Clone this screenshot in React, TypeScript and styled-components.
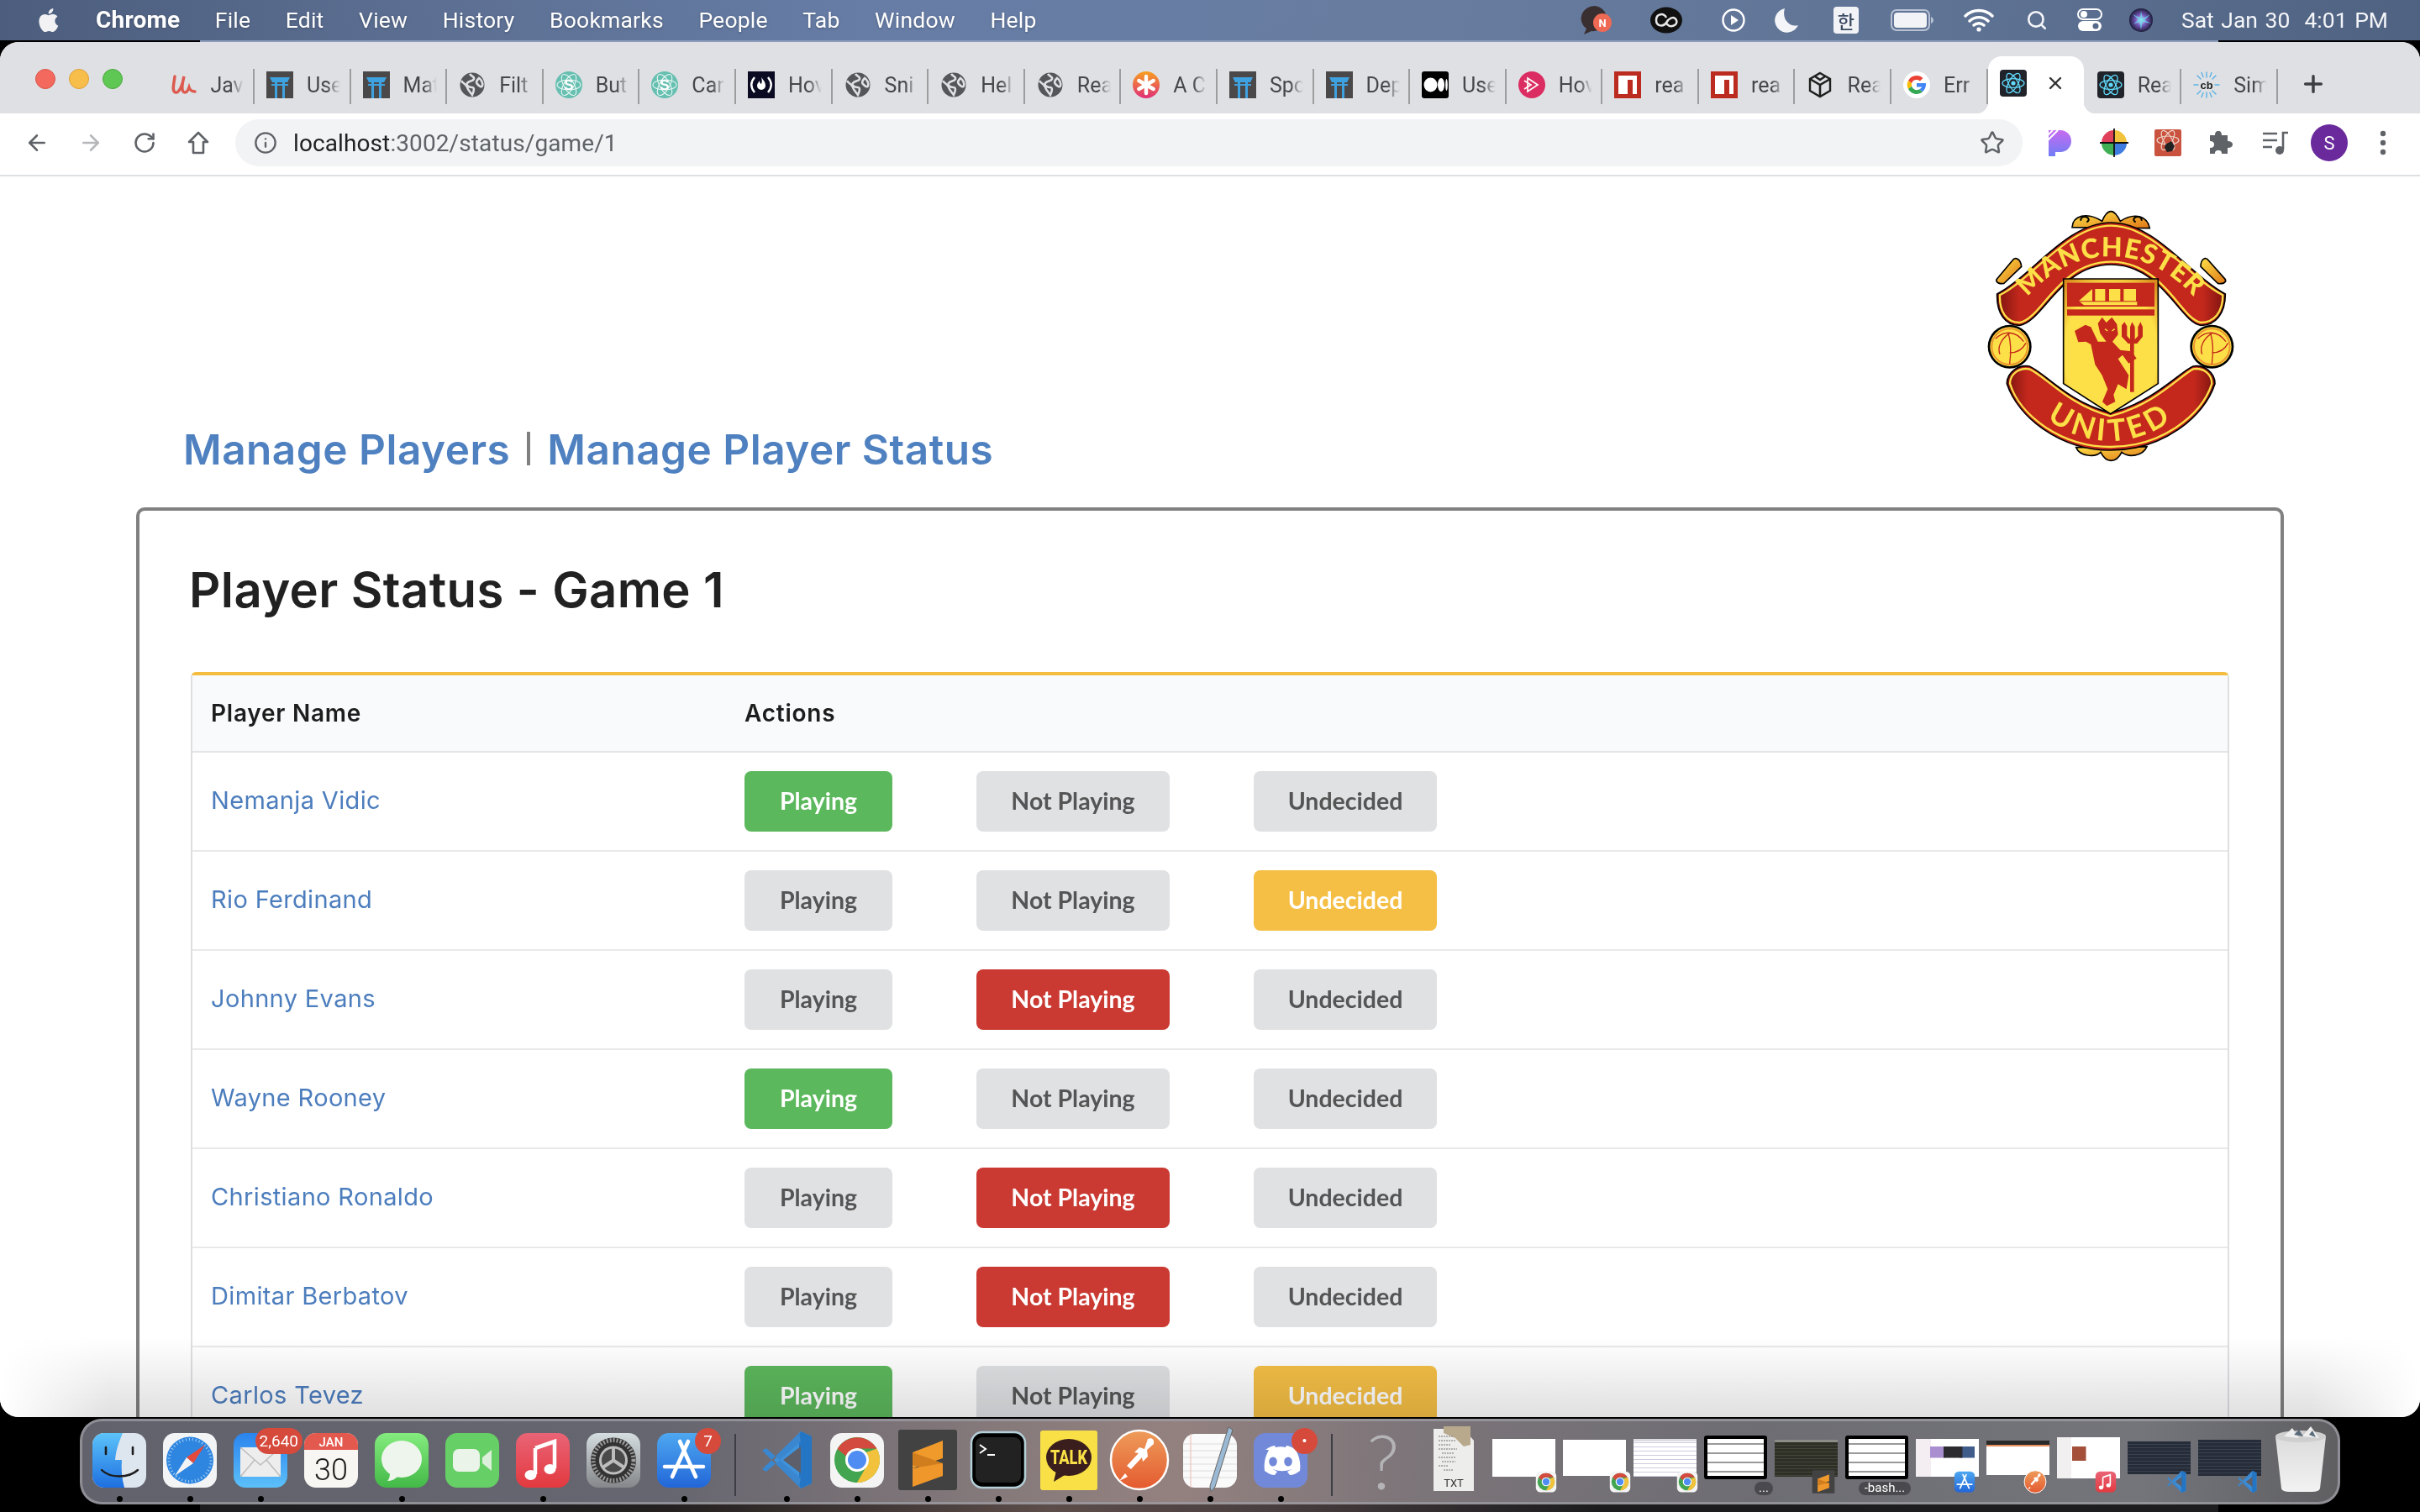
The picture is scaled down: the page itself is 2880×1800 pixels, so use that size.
import React from "react";
import styled, { createGlobalStyle } from "styled-components";
import { ArrowLeft, ArrowRight, RotateCw, Info, Star, Search, X, Plus } from "lucide-react";

const Global = createGlobalStyle`
  html, body { margin: 0; padding: 0; background: #000; }
  * { box-sizing: border-box; }
`;

const SANS = `"Inter", "Liberation Sans", sans-serif`;
const UI = `"Roboto", "Liberation Sans", sans-serif`;

const Screen = styled.div`
  width: 2880px; height: 1800px; background: #000; overflow: hidden;
  display: flex; flex-direction: column; font-family: ${SANS};
`;

/* ---------- macOS menu bar ---------- */
const MenuBar = styled.header`
  height: 50px; flex: none; display: flex; align-items: center; padding: 0 0 3px 45px; color: #fff;
  background:
    linear-gradient(to right, #000 238px, #8d9cbb 238px, #8d9cbb 2640px, #000 2640px) bottom / 100% 2px no-repeat,
    linear-gradient(to right, #4c5d7d 0, #5c6f92 500px, #677da6 1050px, #687c9f 1700px, #5f7395 2300px, #4f6281 2880px);
`;
const AppleMark = styled.svg`width: 28px; height: 34px; margin-right: 41px; fill: #f2f2f4;`;
const MenuList = styled.nav`display: flex; gap: 41.6px; flex: 1; align-items: center;`;
const MenuItem = styled.span<{ $bold?: boolean }>`
  font: ${(p) => (p.$bold ? 700 : 400)} ${(p) => (p.$bold ? "28px" : "26.5px")} ${UI}; letter-spacing: 0.2px; white-space: nowrap;
  color: #fff; text-shadow: 0 1px 3px rgba(0,0,0,.25);
`;
const StatusArea = styled.div`display: flex; align-items: center; height: 100%;`;
const StatusSlot = styled.span<{ $w: number }>`
  width: ${(p) => p.$w}px; display: flex; align-items: center; justify-content: center; flex: none;
`;
const ClockText = styled.span`
  font: 400 26.5px ${UI}; color: #f4f5f8; white-space: nowrap; margin-left: 18px; margin-right: 38px; word-spacing: 2px;
`;

/* ---------- browser window ---------- */
const Win = styled.main`
  height: 1637px; flex: none; display: flex; flex-direction: column; overflow: hidden;
  border-radius: 22px; background: #fff; position: relative;
`;
const TabStrip = styled.div`
  height: 85px; flex: none; background: #dfe0e3; display: flex; align-items: flex-start;
`;
const Lights = styled.div`
  width: 188.4px; flex: none; display: flex; gap: 16px; padding: 32px 0 0 42px;
`;
const Light = styled.i<{ $c: string; $e: string }>`
  width: 24px; height: 24px; border-radius: 50%; background: ${(p) => p.$c}; border: 1px solid ${(p) => p.$e};
`;
const Tab = styled.div`
  width: 114.6px; height: 42px; margin-top: 32px; flex: none; display: flex; align-items: center; gap: 16px;
  padding-left: 14px; padding-bottom: 4px; border-right: 2px solid #9c9d9f;
`;
const TabLabel = styled.span`
  width: 48px; white-space: nowrap; font: 400 25px ${UI}; color: #45474a;
  -webkit-mask-image: linear-gradient(to right, #000 24px, transparent 40px);
  mask-image: linear-gradient(to right, #000 24px, transparent 40px);
`;
const ActiveTab = styled.div`
  width: 114px; height: 68px; margin-top: 17px; margin-right: 2px; flex: none; background: #fff; position: relative;
  border-radius: 16px 16px 0 0; display: flex; align-items: center; gap: 22px; padding: 0 0 4px 14px; color: #333;
  &::before, &::after { content: ""; position: absolute; bottom: 0; width: 14px; height: 14px; }
  &::before { left: -14px; background: radial-gradient(circle at 0 0, transparent 14px, #fff 14.5px); }
  &::after { right: -14px; background: radial-gradient(circle at 100% 0, transparent 14px, #fff 14.5px); }
`;
const NewTab = styled.span`
  margin: 34px 0 0 26px; color: #3c3e42; display: flex;
`;
const Toolbar = styled.div`
  height: 75px; flex: none; display: flex; align-items: center; background: #fff; border-bottom: 2px solid #dfe0e3;
  padding: 0 0 3px 0;
`;
const ToolSlot = styled.span<{ $w: number; $c?: string }>`
  width: ${(p) => p.$w}px; flex: none; display: flex; align-items: center; justify-content: center;
  color: ${(p) => p.$c || "#5f6368"};
`;
const Omnibox = styled.div`
  width: 2127px; height: 56px; flex: none; margin: 0 13px 0 12px; border-radius: 28px; background: #f1f3f4;
  display: flex; align-items: center; padding: 0 21px 0 22px; color: #5f6368;
`;
const UrlText = styled.span`
  font: 400 28px ${UI}; color: #5f6368; margin-left: 19px; flex: 1; letter-spacing: 0.1px;
  b { font-weight: 400; color: #202124; }
`;
const Avatar = styled.span`
  width: 44px; height: 44px; border-radius: 50%; background: #6a2a9c; color: #fff;
  display: flex; align-items: center; justify-content: center; font: 400 22px ${UI};
`;

/* ---------- page ---------- */
const Page = styled.section`
  flex: 1; min-height: 0; position: relative; overflow: hidden; background: #fff;
  &::after {
    content: ""; position: absolute; left: 0; right: 0; bottom: 0; height: 95px; pointer-events: none;
    background: linear-gradient(to bottom, rgba(255,255,255,0), rgba(205,205,207,.62));
    mix-blend-mode: multiply;
    -webkit-mask-image: linear-gradient(to right, transparent 0, #000 130px, #000 2750px, transparent 2880px);
    mask-image: linear-gradient(to right, transparent 0, #000 130px, #000 2750px, transparent 2880px);
  }
`;
const PageHead = styled.div`
  height: 394px; display: flex; justify-content: space-between; align-items: flex-start;
  padding: 20px 200px 0 218px;
`;
const PageNav = styled.nav`
  display: flex; align-items: center; margin-top: 272px; gap: 20px;
`;
const NavLink = styled.a`
  font: 600 49.5px ${SANS}; letter-spacing: 0.5px; color: #4f81c0; white-space: nowrap; line-height: 66px;
`;
const NavDivider = styled.span`
  width: 4px; height: 40px; background: #808080; flex: none; margin-top: -2px;
`;
const LogoSvg = styled.svg`width: 360px; height: 340px; flex: none; display: block;`;

const Card = styled.div`
  margin: 0 162px 0 162px; border: 4px solid #808080; border-radius: 10px; padding: 48px 61px 0 61px; background: #fff;
`;
const Title = styled.h1`
  margin: 0 0 52px -2px; font: 600 58px/92px ${SANS}; color: #212121; letter-spacing: 0.4px;
`;
const Table = styled.table`
  width: 100%; border-collapse: separate; border-spacing: 0; table-layout: fixed;
  border-top: 4px solid #f4bd3f; border-left: 2px solid #dedfe1; border-right: 2px solid #dedfe1; border-radius: 6px 6px 0 0;
`;
const NameCol = styled.col`width: 634px;`;
const HeadCell = styled.th`
  height: 92px; text-align: left; background: #f9fafb; padding: 0 0 0 22px; border-bottom: 2px solid #e3e4e6;
  font: 600 28px ${SANS}; color: #1d1d1d; letter-spacing: 0.75px;
  &:last-child { padding-left: 23px; }
`;
const Cell = styled.td`
  height: 118px; padding: 0 0 0 22px; border-bottom: 2px solid #e9e9ea; vertical-align: middle;
  &:last-child { padding-left: 23px; }
`;
const PlayerLink = styled.a`
  font: 400 29px ${SANS}; letter-spacing: 0.35px; color: #4c7dbd; position: relative; top: -2px;
`;
const Actions = styled.div`display: flex; gap: 100px;`;
const ToggleBtn = styled.button<{ $on?: string; $w: number }>`
  width: ${(p) => p.$w}px; height: 72px; border: 0; border-radius: 8px; padding: 0 0 3px; cursor: pointer;
  background: ${(p) => p.$on || "#e0e1e3"}; color: ${(p) => (p.$on ? "#fff" : "#555")};
  font: 700 28.5px "Lato", sans-serif;
`;

/* ---------- dock ---------- */
const DockZone = styled.footer`
  height: 113px; flex: none; padding: 2px 0 0 95px;
  background:
    linear-gradient(to bottom, #000 2px, transparent 2px),
    linear-gradient(to right, #000 238px, #1d1d20 238px, #23201f 800px, #5c4d4a 1250px, #4a3f40 1500px, #1c1c1f 1900px, #1d1d20 2640px, #000 2640px);
`;
const Dock = styled.div`
  width: 2690px; height: 102px; border-radius: 26px; border: 3px solid rgba(158,158,164,.75);
  display: flex; padding: 4px 0 0 2px;
  background: linear-gradient(to right, #62626c 0, #666670 700px, #8a7c7c 1150px, #93817f 1300px, #7b7479 1600px, #6d6d73 2000px, #74757b 2450px, #5f5f62 2690px);
`;
const DockItem = styled.div`
  width: 84px; flex: none; height: 92px; position: relative; display: flex; flex-direction: column; align-items: center;
`;
const RunDot = styled.i<{ $on?: boolean }>`
  width: 7px; height: 7px; border-radius: 50%; margin-top: 1px; background: ${(p) => (p.$on ? "#000" : "transparent")}; flex: none;
`;
const DockSep = styled.div`
  width: 38px; flex: none; display: flex; justify-content: center; padding-top: 11px;
  &::before { content: ""; width: 2px; height: 74px; background: #3d3d44; }
`;
const Badge = styled.span<{ $size?: boolean }>`
  position: absolute; top: 4px; right: ${(p) => (p.$size ? "-8px" : "-2px")}; height: 31px; min-width: 31px;
  padding: 0 5px; border-radius: 16px; background: #d64a3c; color: #fff; font: 400 19px/31px ${UI}; text-align: center;
`;
const ThumbSlot = styled.div`
  width: 84px; height: 92px; flex: none; position: relative; display: flex; justify-content: center;
`;
const ThumbPage = styled.div<{ $top: number; $h: number; $kind: string }>`
  position: absolute; top: ${(p) => p.$top}px; left: 4px; width: 75px; height: ${(p) => p.$h}px; overflow: hidden;
  ${(p) => p.$kind === "blank" && "background:#fff;"}
  ${(p) => p.$kind === "web" && "background:linear-gradient(to bottom,#dcdde0 3px,transparent 3px) top/100% 100% no-repeat,repeating-linear-gradient(to bottom,#fff 0,#fff 4px,#cfcbe0 4px,#cfcbe0 5px);"}
  ${(p) => p.$kind === "term" && "background:repeating-linear-gradient(to bottom,#fff 0,#fff 5px,#9a9a9a 5px,#9a9a9a 7px,#fff 7px,#fff 11px);border:4px solid #000;border-radius:3px;"}
  ${(p) => p.$kind === "subl" && "background:repeating-linear-gradient(to bottom,#2e2f26 0,#2e2f26 3px,#44463a 3px,#44463a 4px);border-top:3px solid #8c8c88;"}
  ${(p) => p.$kind === "store" && "background:linear-gradient(#2c2c30,#2c2c30) 62% 30%/30% 30% no-repeat,linear-gradient(#3f5c8a,#3f5c8a) 92% 30%/24% 30% no-repeat,linear-gradient(#aa8fd0,#aa8fd0) 30% 30%/24% 30% no-repeat,linear-gradient(to right,#f4eef2 24%,#fff 24%);"}
  ${(p) => p.$kind === "post" && "background:linear-gradient(to bottom,#2a2a2a 5px,#e88e5b 5px,#e88e5b 7px,#fff 7px);"}
  ${(p) => p.$kind === "music" && "background:linear-gradient(#a34f3a,#a34f3a) 30% 35%/22% 35% no-repeat,linear-gradient(to right,#f1efef 22%,#fff 22%);"}
  ${(p) => p.$kind === "code" && "background:repeating-linear-gradient(to bottom,#262c38 0,#262c38 3px,#3a4252 3px,#3a4252 4px);"}
`;
const ThumbMini = styled.span<{ $right: number }>`
  position: absolute; top: 52px; right: ${(p) => p.$right}px; display: flex;
`;
const ThumbPill = styled.span<{ $left: number; $w: number }>`
  position: absolute; top: 68px; left: ${(p) => p.$left}px; width: ${(p) => p.$w}px; height: 16px; border-radius: 8px;
  background: #4a4a4e; color: #fff; font: 400 15px/15px ${UI}; text-align: center; white-space: nowrap;
`;
const HangulTile = styled.span`
  width: 30px; height: 32px; border-radius: 4px; background: #f2f3f6; color: #3b4a63;
  display: flex; align-items: center; justify-content: center; font: 500 22px "Noto Sans CJK KR", sans-serif;
`;
const QuestionMark = styled.span`
  font: 300 90px/84px "Lato", sans-serif; color: #b4b4b6; height: 84px;
`;

/* ---------- drawings ---------- */
const Fav: React.FC<{ k: string }> = ({ k }) => {
  const s = { width: 32, height: 32, flex: "none" } as const;
  switch (k) {
    case "udemy":
      return <svg viewBox="0 0 32 32" style={s}><path d="M6 6c-1 9-4 18 1 19 4 1 8-8 10-19-2 8-4 19 1 19 3 0 4-3 5-6 1 3 3 5 7 5" fill="none" stroke="#dd5a50" strokeWidth="3.400" strokeLinecap="round" /></svg>;
    case "torii":
      return <svg viewBox="0 0 32 32" style={s}><rect width="32" height="32" fill="#4a4848" /><path d="M4 7h24l-3 6H7zM6 15h20v2H6zM10 13h3v19h-3zM19 13h3v19h-3z" fill="#3fa2e0" /></svg>;
    case "globe":
      return <svg viewBox="0 0 32 32" style={s}><circle cx="16" cy="16" r="14.500" fill="#55565a" /><path d="M13 3c2 3 6 3 5 6s-6 2-8 5 3 5 6 5 2 5 0 9c-2-3-5-5-6-9s-6-5-7-8M24 8c3 2 5 6 4 9s-4 0-6-2 0-5 2-7z" fill="none" stroke="#dfe0e3" strokeWidth="2.600" /></svg>;
    case "reacts":
      return <svg viewBox="0 0 32 32" style={s}><circle cx="16" cy="16" r="16" fill="#66bfb0" /><g fill="none" stroke="#e8f7f3" strokeWidth="1.100"><ellipse cx="16" cy="16" rx="14" ry="6" /><ellipse cx="16" cy="16" rx="14" ry="6" transform="rotate(60 16 16)" /><ellipse cx="16" cy="16" rx="14" ry="6" transform="rotate(120 16 16)" /></g><text x="16" y="22" textAnchor="middle" fontSize="17" fontWeight="700" fill="#fff" fontFamily="Liberation Sans">S</text></svg>;
    case "fcc":
      return <svg viewBox="0 0 32 32" style={s}><rect width="32" height="32" fill="#0a0a23" /><path d="M8 7c-5 6-5 12 0 18M24 7c5 6 5 12 0 18" fill="none" stroke="#fff" strokeWidth="2.400" /><path d="M16 7c4 5 5 7 5 10a5 5 0 0 1-10 0c0-3 2-4 3-6 0 3 1 3 2 4 1-2 1-5 0-8z" fill="#fff" /></svg>;
    case "aster":
      return <svg viewBox="0 0 32 32" style={s}><defs><linearGradient id="astg" x1="0" y1="0" x2="0" y2="1"><stop offset="0" stopColor="#f7a020" /><stop offset="1" stopColor="#e02f78" /></linearGradient></defs><circle cx="16" cy="16" r="16" fill="url(#astg)" /><g stroke="#fff" strokeWidth="4.400" strokeLinecap="round"><path d="M16 6v20M7.300 11l17.400 10M24.700 11L7.300 21" /></g></svg>;
    case "medium":
      return <svg viewBox="0 0 32 32" style={s}><rect width="32" height="32" rx="3" fill="#000" /><ellipse cx="10.500" cy="16" rx="8" ry="8.500" fill="#fff" /><ellipse cx="23" cy="16" rx="4" ry="8" fill="#fff" /><ellipse cx="29.500" cy="16" rx="1.300" ry="7" fill="#fff" /></svg>;
    case "plural":
      return <svg viewBox="0 0 32 32" style={s}><circle cx="16" cy="16" r="16" fill="#db2d62" /><path d="M11 8l12 8-12 8zM7 11l8 5-8 5" fill="none" stroke="#fff" strokeWidth="1.700" /></svg>;
    case "npm":
      return <svg viewBox="0 0 32 32" style={s}><rect width="32" height="32" fill="#bb2b1f" /><path d="M5 5h22v22h-5V10h-6v17H5z" fill="#fff" /></svg>;
    case "box":
      return <svg viewBox="0 0 32 32" style={s}><path d="M16 2l12 7v14l-12 7-12-7V9z" fill="none" stroke="#1f1f1f" strokeWidth="2.400" /><path d="M4 9l12 7 12-7M16 16v14M10 6l6 4 6-4" fill="none" stroke="#1f1f1f" strokeWidth="2.600" /></svg>;
    case "google":
      return <svg viewBox="0 0 32 32" style={s}><circle cx="16" cy="16" r="16" fill="#fff" /><path d="M16 5a11 11 0 0 1 7.500 2.900l-3.600 3.500A6 6 0 0 0 16 10z" fill="#ea4335" /><path d="M16 5a11 11 0 0 0-10 6l4.100 3.200A6 6 0 0 1 16 10z" fill="#ea4335" /><path d="M6 11a11 11 0 0 0 0 10l4.100-3.200a6 6 0 0 1 0-3.600z" fill="#fbbc05" /><path d="M6 21a11 11 0 0 0 17 3.200l-3.900-3a6 6 0 0 1-9-3.400z" fill="#34a853" /><path d="M27 14H16v4.500h6.200a5 5 0 0 1-3.100 2.700l3.900 3c2.800-2.500 4.400-6 4-10.200z" fill="#4285f4" /></svg>;
    case "reactd":
      return <svg viewBox="0 0 32 32" style={s}><rect width="32" height="32" rx="4" fill="#20232a" /><g fill="none" stroke="#61dafb" strokeWidth="1.300"><ellipse cx="16" cy="16" rx="13" ry="5.400" /><ellipse cx="16" cy="16" rx="13" ry="5.400" transform="rotate(60 16 16)" /><ellipse cx="16" cy="16" rx="13" ry="5.400" transform="rotate(120 16 16)" /></g><circle cx="16" cy="16" r="2.600" fill="#61dafb" /></svg>;
    default:
      return <svg viewBox="0 0 32 32" style={s}><g stroke="#5ab2e6" strokeWidth="1.400" strokeLinecap="round"><path d="M16 1v6M16 25v6M1 16h5M26 16h5M5 5l4 4M23 23l4 4M27 5l-4 4M9 23l-4 4M10 1.500l2 5M22 1.500l-2 5M10 30.500l2-5M22 30.500l-2-5" /></g><text x="16" y="21" textAnchor="middle" fontSize="13" fontWeight="700" fill="#222" fontFamily="Liberation Sans">cb</text></svg>;
  }
};

const AppIcon: React.FC<{ k: string; size?: number }> = ({ k, size = 84 }) => {
  const s = { width: size, height: size, flex: "none", display: "block" } as const;
  const V = "0 0 84 84";
  switch (k) {
    case "finder":
      return <svg viewBox={V} style={s}><defs><linearGradient id="fg" x1="0" y1="0" x2="0" y2="1"><stop offset="0" stopColor="#5cc3fa" /><stop offset="1" stopColor="#1e6fe0" /></linearGradient></defs><rect x="10" y="10" width="64" height="65" rx="14" fill="#dde5ef" /><path d="M24 10h22c-5 12-8 20-9 32h8c-1 11 0 22 3 33H24a14 14 0 0 1-14-14V24a14 14 0 0 1 14-14z" fill="url(#fg)" /><path d="M26 27v8M58 27v8" stroke="#1c1c1c" strokeWidth="2.600" strokeLinecap="round" /><path d="M21 54c10 10 32 10 43 0" fill="none" stroke="#1c1c1c" strokeWidth="2.400" strokeLinecap="round" /></svg>;
    case "safari":
      return <svg viewBox={V} style={s}><rect x="10" y="10" width="64" height="65" rx="14" fill="#f3f4f5" /><circle cx="42" cy="42.500" r="28" fill="#2f86e0" /><circle cx="42" cy="42.500" r="25" fill="none" stroke="#a9d2f5" strokeWidth="3" strokeDasharray="1 3" /><path d="M60 24L38 39l8 7z" fill="#e5493c" /><path d="M24 61l22-15-8-7z" fill="#f4f4f4" /></svg>;
    case "mail":
      return <svg viewBox={V} style={s}><defs><linearGradient id="mg" x1="0" y1="0" x2="0" y2="1"><stop offset="0" stopColor="#2a84ee" /><stop offset="1" stopColor="#5cc0fa" /></linearGradient></defs><rect x="10" y="10" width="64" height="65" rx="14" fill="url(#mg)" /><rect x="18" y="27" width="48" height="35" rx="3" fill="#ededed" /><path d="M18 27l24 21 24-21M18 62l17-20M66 62L49 42" fill="none" stroke="#bdbdbd" strokeWidth="1.500" /></svg>;
    case "calendar":
      return <svg viewBox={V} style={s}><rect x="10" y="10" width="64" height="65" rx="14" fill="#f7f6f2" /><path d="M24 10h36a14 14 0 0 1 14 14v6H10v-6a14 14 0 0 1 14-14z" fill="#e4594e" /><text x="42" y="26" textAnchor="middle" fontSize="15" fontWeight="500" fill="#fff" fontFamily="Roboto">JAN</text><text x="42" y="66" textAnchor="middle" fontSize="36" fontWeight="300" fill="#1a1a1a" fontFamily="Roboto">30</text></svg>;
    case "messages":
      return <svg viewBox={V} style={s}><defs><linearGradient id="msg" x1="0" y1="0" x2="0" y2="1"><stop offset="0" stopColor="#84ec7e" /><stop offset="1" stopColor="#43b948" /></linearGradient></defs><rect x="10" y="10" width="64" height="65" rx="14" fill="url(#msg)" /><ellipse cx="42" cy="41" rx="24" ry="22" fill="#eef5ec" /><path d="M28 58c0 4-1 7-3 9 5 0 9-2 12-5z" fill="#eef5ec" /></svg>;
    case "facetime":
      return <svg viewBox={V} style={s}><rect x="10" y="10" width="64" height="65" rx="14" fill="#66cf66" /><rect x="19" y="29" width="32" height="27" rx="7" fill="#eaf4e8" /><path d="M54 39l11-9v25l-11-9z" fill="#dcefda" /></svg>;
    case "music":
      return <svg viewBox={V} style={s}><defs><linearGradient id="mug" x1="0" y1="0" x2="0" y2="1"><stop offset="0" stopColor="#e96476" /><stop offset="1" stopColor="#e3393f" /></linearGradient></defs><rect x="10" y="10" width="64" height="65" rx="14" fill="url(#mug)" /><path d="M33 28l23-8v32" fill="none" stroke="#fff" strokeWidth="4.500" /><path d="M33 28v31" stroke="#fff" strokeWidth="4.500" /><ellipse cx="27.500" cy="60" rx="7" ry="6" fill="#fff" /><ellipse cx="50.500" cy="53" rx="7" ry="6" fill="#fff" /></svg>;
    case "prefs":
      return <svg viewBox={V} style={s}><defs><linearGradient id="pg" x1="0" y1="0" x2="0" y2="1"><stop offset="0" stopColor="#d5dde0" /><stop offset="1" stopColor="#85878a" /></linearGradient></defs><rect x="10" y="10" width="64" height="65" rx="14" fill="url(#pg)" /><circle cx="42" cy="42.500" r="27" fill="#333" /><circle cx="42" cy="42.500" r="24" fill="none" stroke="#9a9a9a" strokeWidth="5" strokeDasharray="2 2" /><circle cx="42" cy="42.500" r="17" fill="#bdbdbd" /><circle cx="42" cy="42.500" r="14" fill="#4a4a4a" /><path d="M42 42.500V28M42 42.500l12 8M42 42.500l-12 8" stroke="#bdbdbd" strokeWidth="4" /></svg>;
    case "appstore":
      return <svg viewBox={V} style={s}><defs><linearGradient id="ag" x1="0" y1="0" x2="0" y2="1"><stop offset="0" stopColor="#4ea8f0" /><stop offset="1" stopColor="#2266d8" /></linearGradient></defs><rect x="10" y="10" width="64" height="65" rx="14" fill="url(#ag)" /><path d="M47 20L28 62M37 20l19 42M19 50h46" stroke="#fff" strokeWidth="4.600" strokeLinecap="round" /></svg>;
    case "vscode":
      return <svg viewBox={V} style={s}><path d="M59 8L27 42l32 34 13-6V14z" fill="#3f93dc" /><path d="M59 8l13 6v56l-13 6-2-4V12z" fill="#2475c4" /><path d="M59 26L38 42l21 16z" fill="#5d5f6a" /><path d="M13 31l5-3 41 36-2 10zM13 53l5 3 41-36-2-10z" fill="#3a86cf" /></svg>;
    case "chrome":
      return <svg viewBox={V} style={s}><rect x="10" y="10" width="64" height="65" rx="14" fill="#f4f4f4" /><circle cx="42" cy="42" r="27" fill="#43a54f" /><path d="M18.600 29A27 27 0 0 1 65.400 28.500H42a14 14 0 0 0-13 9z" fill="#d34a3e" /><path d="M65.400 28.500A27 27 0 0 1 42 69l11.700-20.200A14 14 0 0 0 53 33z" fill="#f2c23c" /><circle cx="42" cy="42" r="14" fill="#fff" /><circle cx="42" cy="42" r="11" fill="#4f8df2" /></svg>;
    case "sublime":
      return <svg viewBox={V} style={s}><rect x="7" y="6" width="70" height="72" rx="3" fill="#424242" /><path d="M60 19v21L24 52V33z" fill="#f09a2c" /><path d="M24 33l36 13v15L24 48z" fill="#d07d1e" /><path d="M60 46v15L24 74V52z" fill="#ef972b" /></svg>;
    case "terminal":
      return <svg viewBox={V} style={s}><rect x="10" y="9" width="64" height="66" rx="13" fill="#000" stroke="#b3cfd8" strokeWidth="2.500" /><rect x="15" y="15" width="54" height="54" rx="8" fill="#222" /><path d="M20 24l7 5-7 5" fill="none" stroke="#fff" strokeWidth="2" /><path d="M29 36h9" stroke="#fff" strokeWidth="2" /></svg>;
    case "talk":
      return <svg viewBox={V} style={s}><rect x="8" y="7" width="68" height="71" rx="3" fill="#f9e046" /><ellipse cx="42" cy="39" rx="27" ry="22" fill="#3a1d1d" /><path d="M27 55l-3 13 13-8z" fill="#3a1d1d" /><text x="42" y="47" textAnchor="middle" fontSize="24" fontWeight="800" fill="#f9e046" fontFamily="Roboto" textLength="44" lengthAdjust="spacingAndGlyphs">TALK</text></svg>;
    case "postman":
      return <svg viewBox={V} style={s}><defs><linearGradient id="og" x1="0" y1="0" x2="0" y2="1"><stop offset="0" stopColor="#ee9c5a" /><stop offset="1" stopColor="#e45a30" /></linearGradient></defs><ellipse cx="42" cy="42" rx="34" ry="35" fill="url(#og)" stroke="#fff" strokeWidth="2.500" /><path d="M52 17c5-2 8 1 7 6l-8 7 1 8-6 6-1-5-13 14-5-4 14-15-5-1 6-6 6 2z" fill="#fff" /><path d="M25 58l-7 9 10-5z" fill="#fff" /></svg>;
    case "textedit":
      return <svg viewBox={V} style={s}><rect x="10" y="11" width="64" height="64" rx="14" fill="#fafafa" /><path d="M10 23h64M10 31h64M10 39h64M10 47h64M10 55h64M10 63h64" stroke="#dcdcdc" strokeWidth="1" /><path d="M19 11v64" stroke="#f0b8b0" strokeWidth="1" /><path d="M64 3l5 3-21 68-5 6-1-7z" fill="#9ab9d4" stroke="#666" strokeWidth="1" /></svg>;
    case "discord":
      return <svg viewBox={V} style={s}><rect x="10" y="10" width="64" height="65" rx="14" fill="#7289da" /><path d="M24 30c5-4 10-5 11-5l1 2c4-1 8-1 12 0l1-2c1 0 6 1 11 5 5 9 6 17 5 25-4 3-8 5-12 5l-3-4 5-3c-8 3-14 3-22 0l5 3-3 4c-4 0-8-2-12-5-1-8 0-16 5-25z" fill="#fff" /><ellipse cx="33" cy="44" rx="4.800" ry="5.500" fill="#7289da" /><ellipse cx="51" cy="44" rx="4.800" ry="5.500" fill="#7289da" /></svg>;
    case "txt":
      return <svg viewBox={V} style={s}><path d="M18 5h36l12 14v60H18z" fill="#ededeb" /><path d="M30 2h32v22L54 26 44 16 30 10z" fill="#b9a98c" /><path d="M24 14h18M24 19h20M24 24h14M24 29h22M28 34h14M24 39h20M28 44h16M24 49h12M30 54h12" stroke="#9a9a9a" strokeWidth="1.400" strokeDasharray="2 1" /><text x="42" y="74" textAnchor="middle" fontSize="13" fill="#333" fontFamily="Roboto">TXT</text></svg>;
    default:
      return <svg viewBox={V} style={s}><defs><linearGradient id="tg" x1="0" y1="0" x2="0" y2="1"><stop offset="0" stopColor="#dcdcdc" /><stop offset="1" stopColor="#f2f2f2" /></linearGradient></defs><path d="M12 14h60l-7 62q-1 4-10 4H29q-9 0-10-4z" fill="url(#tg)" /><ellipse cx="42" cy="14" rx="30" ry="7" fill="#cfcfcf" /><path d="M22 14l10-10 8 12zM44 14l10-12 10 14z" fill="#eee" /><path d="M34 12l6-6 5 8zM52 12l4-5 4 8z" fill="#5a6b7a" /></svg>;
  }
};

const Crest: React.FC = () => (
  <LogoSvg viewBox="0 0 1080 1020" aria-label="Manchester United crest">
    <defs>
      <linearGradient id="bannerA" x1="0" y1="0" x2="1" y2="0">
        <stop offset="0" stopColor="#7a1410" /><stop offset=".1" stopColor="#c4281c" /><stop offset=".9" stopColor="#c4281c" /><stop offset="1" stopColor="#7a1410" />
      </linearGradient>
      <linearGradient id="scrollG" x1="0" y1="0" x2="1" y2="1">
        <stop offset="0" stopColor="#fde047" /><stop offset="1" stopColor="#e07818" />
      </linearGradient>
      <radialGradient id="shieldG" cx=".5" cy=".55" r=".7">
        <stop offset=".7" stopColor="#fde047" /><stop offset="1" stopColor="#d98a1e" />
      </radialGradient>
      <path id="crestTop" d="M232,432 C320,300 440,226 575,226 C710,226 830,300 920,432" />
      <path id="crestBottom" d="M300,770 Q575,1000 850,770" />
    </defs>

    {/* top and bottom ornaments */}
    <g stroke="#000" strokeWidth="5" fill="url(#scrollG)">
      <path d="M438,122 C440,80 490,65 545,100 C555,75 565,65 577,65 C590,65 600,80 610,100 C665,65 708,85 715,125 Z" />
      <path d="M452,908 C465,940 520,945 540,925 C550,945 565,955 577,955 C590,955 605,945 615,925 C640,945 690,940 705,905 Z" />
      <path d="M168,308 L225,240 C235,225 255,235 257,262 L195,322 C180,325 165,320 168,308 Z" />
      <path d="M985,308 L925,240 C915,225 897,235 897,262 L958,322 C975,325 990,320 985,308 Z" />
    </g>
    <path d="M470,98 a14,10 0 1 1 20,5 M685,98 a14,10 0 1 0 -20,5" fill="none" stroke="#000" strokeWidth="6" />

    {/* upper banner */}
    <path
      d="M170,360 C300,290 420,105 577,105 C735,105 855,290 985,360 C985,430 950,472 898,472 C820,460 760,255 577,255 C395,255 335,460 250,472 C200,472 168,430 170,360 Z"
      fill="url(#bannerA)" stroke="#000" strokeWidth="5"
    />
    <path
      d="M180,364 C305,298 425,116 577,116 C730,116 850,298 976,364 C976,425 945,462 898,462 C825,450 765,245 577,245 C390,245 330,450 250,462 C205,462 178,425 180,364 Z"
      fill="none" stroke="#fde047" strokeWidth="7"
    />

    {/* lower banner */}
    <path
      d="M205,680 C205,640 245,612 285,618 C340,640 420,745 575,785 C730,745 820,640 870,618 C910,612 948,640 948,680 C910,800 760,918 575,918 C395,918 245,800 205,680 Z"
      fill="url(#bannerA)" stroke="#000" strokeWidth="5"
    />
    <path
      d="M216,680 C216,645 250,622 285,628 C340,650 420,755 575,796 C735,755 825,650 870,628 C905,622 937,645 937,680 C900,795 755,906 575,906 C400,906 252,795 216,680 Z"
      fill="none" stroke="#fde047" strokeWidth="7"
    />

    {/* shield */}
    <path d="M407,306 H745 V680 L575,788 L407,680 Z" fill="url(#shieldG)" stroke="#000" strokeWidth="5" />
    <rect x="420" y="320" width="312" height="85" fill="#c4281c" />
    <rect x="420" y="415" width="312" height="22" fill="#c4281c" />
    <path d="M462,385 L510,342 V385 Z M520,342 H556 V385 H520 Z M570,342 H610 V385 H570 Z M622,342 H666 V385 H622 Z M465,388 H670 V400 H480 Z" fill="#fde047" />

    {/* red devil */}
    <path
      d="M530,465 L545,443 L560,462 L580,443 L598,468 L602,505 L582,530 L610,560 L650,565 L668,590 L640,608 L618,578 L602,592 L640,650 L632,700 L602,682 L586,720 L592,745 L562,760 L546,745 L565,700 L545,650 L520,612 L505,540 L487,530 L460,532 L447,492 L485,470 L505,478 L530,530 L560,530 L538,500 Z"
      fill="#c4281c"
    />
    <rect x="645" y="505" width="14" height="205" fill="#c4281c" />
    <path d="M615,472 L625,460 L634,475 L634,510 L645,522 L645,478 L652,460 L662,478 L662,522 L673,510 L673,478 L682,460 L690,478 L690,512 L670,537 L638,537 L615,512 Z" fill="#c4281c" />
    <path d="M555,485 L565,492 M590,485 L580,492" stroke="#fde047" strokeWidth="4" />

    {/* footballs */}
    {[215, 937].map((cx) => (
      <g key={cx}>
        <circle cx={cx} cy="548" r="78" fill="#000" />
        <circle cx={cx} cy="548" r="70" fill="#fde047" />
        <circle cx={cx} cy="548" r="64" fill="none" stroke="#e0581c" strokeWidth="6" opacity=".55" />
        <path d={`M${cx - 50},520 C${cx - 20},490 ${cx + 20},490 ${cx + 50},530 M${cx - 35},575 C${cx - 45},550 ${cx - 30},520 ${cx},500 M${cx},610 C${cx + 5},570 ${cx + 5},530 ${cx - 5},500 M${cx},570 C${cx + 25},570 ${cx + 45},560 ${cx + 58},535`} fill="none" stroke="#c4281c" strokeWidth="4" />
      </g>
    ))}

    <text fontFamily="Lato" fontWeight="900" fontSize="96" fill="#fde047" letterSpacing="3">
      <textPath href="#crestTop" startOffset="50%" textAnchor="middle">MANCHESTER</textPath>
    </text>
    <text fontFamily="Lato" fontWeight="700" fontSize="108" fill="#fde047" letterSpacing="14">
      <textPath href="#crestBottom" startOffset="50%" textAnchor="middle">UNITED</textPath>
    </text>
  </LogoSvg>
);

const menuItems = ["File", "Edit", "View", "History", "Bookmarks", "People", "Tab", "Window", "Help"];

const tabs: [string, string][] = [
  ["udemy", "Jav"], ["torii", "Use"], ["torii", "Mat"], ["globe", "Filt"], ["reacts", "But"], ["reacts", "Car"],
  ["fcc", "Hov"], ["globe", "Sni"], ["globe", "Hel"], ["globe", "Rea"], ["aster", "A C"], ["torii", "Spo"],
  ["torii", "Dep"], ["medium", "Use"], ["plural", "Hov"], ["npm", "rea"], ["npm", "rea"], ["box", "Rea"], ["google", "Err"],
];

type Status = "playing" | "notPlaying" | "undecided";
const players: [string, Status[]][] = [
  ["Nemanja Vidic", ["playing"]],
  ["Rio Ferdinand", ["undecided"]],
  ["Johnny Evans", ["notPlaying"]],
  ["Wayne Rooney", ["playing"]],
  ["Christiano Ronaldo", ["notPlaying"]],
  ["Dimitar Berbatov", ["notPlaying"]],
  ["Carlos Tevez", ["playing", "undecided"]],
];

const dockApps: [string, boolean][] = [
  ["finder", true], ["safari", true], ["mail", true], ["calendar", false], ["messages", true], ["facetime", false],
  ["music", true], ["prefs", false], ["appstore", true],
];
const dockApps2: [string, boolean][] = [
  ["vscode", true], ["chrome", true], ["sublime", true], ["terminal", true], ["talk", true], ["postman", true], ["textedit", true], ["discord", true],
];
const thumbs: [string, number, number, string | null, number][] = [
  ["blank", 17, 45, "chrome", 0],
  ["blank", 18, 43, "chrome", -4],
  ["web", 17, 45, "chrome", 0],
  ["term", 13, 52, null, 0],
  ["subl", 18, 44, "sublime", 6],
  ["term", 13, 52, null, 0],
  ["store", 17, 45, "appstore", 6],
  ["post", 19, 41, "postman", 6],
  ["music", 15, 49, "music", 6],
  ["code", 20, 39, "vscode", 6],
  ["code", 18, 43, "vscode", 6],
];

export default function App() {
  return (
    <Screen>
      <Global />
      <MenuBar>
        <AppleMark viewBox="0 0 24 28">
          <path d="M17.500 14.800c0-3 2.500-4.400 2.600-4.500-1.400-2.100-3.600-2.400-4.400-2.400-1.900-.2-3.600 1.100-4.600 1.100-.9 0-2.400-1.100-4-1-2 0-3.900 1.200-4.900 3-2.100 3.700-.5 9.100 1.500 12.100 1 1.500 2.200 3.100 3.800 3 1.500-.1 2.100-1 3.900-1 1.800 0 2.400 1 4 .9 1.700 0 2.700-1.500 3.700-2.900 1.200-1.700 1.700-3.400 1.700-3.500-.1 0-3.300-1.300-3.300-4.800zM14.500 5.800c.8-1 1.400-2.400 1.200-3.800-1.200.1-2.700.8-3.500 1.800-.8.9-1.500 2.300-1.300 3.700 1.300.1 2.700-.7 3.600-1.700z" />
        </AppleMark>
        <MenuList>
          <MenuItem $bold>Chrome</MenuItem>
          {menuItems.map((m) => <MenuItem key={m}>{m}</MenuItem>)}
        </MenuList>
        <StatusArea>
          <StatusSlot $w={70}>
            <svg width="46" height="38" viewBox="0 0 46 38"><path d="M22 2a16 15 0 0 0-10 27l-3 7 9-4a16 15 0 1 0 4-30z" fill="#3a2f30" /><circle cx="31" cy="22" r="11" fill="#ee6a54" /><text x="31" y="27" textAnchor="middle" fontSize="13" fontWeight="700" fill="#fff" fontFamily="Roboto">N</text></svg>
          </StatusSlot>
          <StatusSlot $w={98}>
            <svg width="40" height="34" viewBox="0 0 40 34"><ellipse cx="20" cy="17" rx="19" ry="15.500" fill="#111" /><path d="M20 14c-3-6-12-5-12 3s9 8 12 3 9-9 12-3-9 11-12 3" fill="none" stroke="#e8e8e8" strokeWidth="2.500" /></svg>
          </StatusSlot>
          <StatusSlot $w={62}>
            <svg width="30" height="30" viewBox="0 0 30 30"><circle cx="15" cy="15" r="12.500" fill="none" stroke="#fff" strokeWidth="2.400" /><path d="M12 9l9 6-9 6z" fill="#fff" /></svg>
          </StatusSlot>
          <StatusSlot $w={66}>
            <svg width="30" height="32" viewBox="0 0 30 32"><path d="M12 2a14.500 14.500 0 1 0 16 20C18 25 8 15 12 2z" fill="#f4f5f8" /></svg>
          </StatusSlot>
          <StatusSlot $w={74}>
            <HangulTile>한</HangulTile>
          </StatusSlot>
          <StatusSlot $w={84}>
            <svg width="52" height="26" viewBox="0 0 52 26"><rect x="1" y="1" width="45" height="24" rx="6" fill="none" stroke="#b8c2d4" strokeWidth="2" /><rect x="4" y="4" width="39" height="18" rx="4" fill="#f2f3f6" /><path d="M48 9c2 1 3 2 3 4s-1 3-3 4z" fill="#b8c2d4" /></svg>
          </StatusSlot>
          <StatusSlot $w={74}>
            <svg width="36" height="28" viewBox="0 0 36 28"><path d="M2 9a23 23 0 0 1 32 0M7 15a16 16 0 0 1 22 0M12 20a9 9 0 0 1 12 0" fill="none" stroke="#fff" strokeWidth="3.400" strokeLinecap="round" /><circle cx="18" cy="25" r="2.600" fill="#fff" /></svg>
          </StatusSlot>
          <StatusSlot $w={64}><Search size={26} color="#f4f5f8" strokeWidth={2.4} /></StatusSlot>
          <StatusSlot $w={62}>
            <svg width="30" height="30" viewBox="0 0 30 30"><rect x="1" y="2" width="28" height="12" rx="6" fill="none" stroke="#fff" strokeWidth="2" /><circle cx="8" cy="8" r="4" fill="#fff" /><rect x="1" y="16" width="28" height="12" rx="6" fill="#fff" /><circle cx="22" cy="22" r="3.500" fill="#55698a" /></svg>
          </StatusSlot>
          <StatusSlot $w={60}>
            <svg width="30" height="30" viewBox="0 0 30 30"><defs><radialGradient id="sirig"><stop offset="0" stopColor="#eef" /><stop offset=".45" stopColor="#7a5bc0" /><stop offset="1" stopColor="#1c1c38" /></radialGradient></defs><circle cx="15" cy="15" r="14" fill="url(#sirig)" /><path d="M15 4l2 9 9-5-7 7 8 4-10-2-2 9-2-9-7 3 6-6-7-6 9 4z" fill="#66dbe8" opacity=".75" /></svg>
          </StatusSlot>
          <ClockText>Sat Jan 30&nbsp;&nbsp;4:01 PM</ClockText>
        </StatusArea>
      </MenuBar>

      <Win>
        <TabStrip>
          <Lights>
            <Light $c="#f3695d" $e="#d9534a" />
            <Light $c="#f8be4b" $e="#dea03a" />
            <Light $c="#5fc754" $e="#4ca943" />
          </Lights>
          {tabs.map(([k, t], i) => (
            <Tab key={i}><Fav k={k} /><TabLabel>{t}</TabLabel></Tab>
          ))}
          <ActiveTab><Fav k="reactd" /><X size={24} strokeWidth={2.4} /></ActiveTab>
          <Tab><Fav k="reactd" /><TabLabel>Rea</TabLabel></Tab>
          <Tab><Fav k="cb" /><TabLabel>Sim</TabLabel></Tab>
          <NewTab><Plus size={32} strokeWidth={2.6} /></NewTab>
        </TabStrip>

        <Toolbar>
          <ToolSlot $w={12} />
          <ToolSlot $w={64}><ArrowLeft size={30} strokeWidth={2} /></ToolSlot>
          <ToolSlot $w={64} $c="#b5b7ba"><ArrowRight size={30} strokeWidth={2} /></ToolSlot>
          <ToolSlot $w={64}><RotateCw size={28} strokeWidth={2.2} /></ToolSlot>
          <ToolSlot $w={64}>
            <svg width="28" height="30" viewBox="0 0 28 30"><path d="M14 3L3 14h5v13h12V14h5z" fill="none" stroke="#5f6368" strokeWidth="2.600" strokeLinejoin="round" /></svg>
          </ToolSlot>
          <Omnibox>
            <Info size={28} strokeWidth={2} />
            <UrlText><b>localhost</b>:3002/status/game/1</UrlText>
            <Star size={30} strokeWidth={2} />
          </Omnibox>
          <ToolSlot $w={64}>
            <svg width="30" height="34" viewBox="0 0 30 34"><defs><linearGradient id="pocket" x1="0" y1="0" x2="0" y2="1"><stop offset="0" stopColor="#c76bf0" /><stop offset="1" stopColor="#6f7df5" /></linearGradient></defs><path d="M1 2h14a13 13 0 0 1 0 26H9v5H1z" fill="url(#pocket)" /><path d="M0 14L12 2M0 8l6-6" stroke="#fff" strokeWidth="2" /></svg>
          </ToolSlot>
          <ToolSlot $w={64}>
            <svg width="36" height="36" viewBox="0 0 36 36"><circle cx="18" cy="18" r="15" fill="#fff" /><path d="M18 3a15 15 0 0 1 15 15H18z" fill="#f2c23c" /><path d="M33 18a15 15 0 0 1-15 15V18z" fill="#3f7ce0" /><path d="M18 33A15 15 0 0 1 3 18h15z" fill="#3fae55" /><path d="M3 18A15 15 0 0 1 18 3v15z" fill="#e0405a" /><path d="M18 1v34M1 18h34" stroke="#111" strokeWidth="1.800" /></svg>
          </ToolSlot>
          <ToolSlot $w={64}>
            <svg width="32" height="32" viewBox="0 0 32 32"><rect width="32" height="32" rx="2" fill="#c9533e" /><g fill="none" stroke="#f1d5cc" strokeWidth="1.200"><ellipse cx="16" cy="13" rx="13" ry="5" /><ellipse cx="16" cy="13" rx="13" ry="5" transform="rotate(60 16 13)" /><ellipse cx="16" cy="13" rx="13" ry="5" transform="rotate(120 16 13)" /></g><path d="M13 18l7-4 4 6-3 6-6 1-3-5z" fill="#222" /></svg>
          </ToolSlot>
          <ToolSlot $w={64}>
            <svg width="30" height="30" viewBox="0 0 30 30"><path d="M11 1c3 0 4 2 4 5h7v7c3 0 6 1 6 4s-3 4-6 4v7h-7c0-3-1-4-4-4s-4 1-4 4H1v-7c3 0 5-1 5-4s-2-4-5-4V6h6c0-3 1-5 4-5z" fill="#5f6368" /></svg>
          </ToolSlot>
          <ToolSlot $w={64}>
            <svg width="32" height="30" viewBox="0 0 32 30"><path d="M1 4h17M1 12h17M1 20h11" stroke="#5f6368" strokeWidth="2.600" /><path d="M25 23V3h6" fill="none" stroke="#5f6368" strokeWidth="2.600" /><circle cx="21" cy="24" r="5" fill="#5f6368" /></svg>
          </ToolSlot>
          <ToolSlot $w={64}><Avatar>S</Avatar></ToolSlot>
          <ToolSlot $w={64}>
            <svg width="8" height="30" viewBox="0 0 8 30"><circle cx="4" cy="4" r="3.200" fill="#5f6368" /><circle cx="4" cy="15" r="3.200" fill="#5f6368" /><circle cx="4" cy="26" r="3.200" fill="#5f6368" /></svg>
          </ToolSlot>
        </Toolbar>

        <Page>
          <PageHead>
            <PageNav>
              <NavLink>Manage Players</NavLink>
              <NavDivider />
              <NavLink>Manage Player Status</NavLink>
            </PageNav>
            <Crest />
          </PageHead>
          <Card>
            <Title>Player Status - Game 1</Title>
            <Table>
              <colgroup><NameCol /><col /></colgroup>
              <thead>
                <tr><HeadCell>Player Name</HeadCell><HeadCell>Actions</HeadCell></tr>
              </thead>
              <tbody>
                {players.map(([name, on]) => (
                  <tr key={name}>
                    <Cell><PlayerLink>{name}</PlayerLink></Cell>
                    <Cell>
                      <Actions>
                        <ToggleBtn $w={176} $on={on.includes("playing") ? "#5cb85c" : undefined}>Playing</ToggleBtn>
                        <ToggleBtn $w={230} $on={on.includes("notPlaying") ? "#ca3a33" : undefined}>Not Playing</ToggleBtn>
                        <ToggleBtn $w={218} $on={on.includes("undecided") ? "#f5bf45" : undefined}>Undecided</ToggleBtn>
                      </Actions>
                    </Cell>
                  </tr>
                ))}
              </tbody>
            </Table>
          </Card>
        </Page>
      </Win>

      <DockZone>
        <Dock>
          {dockApps.map(([k, run]) => (
            <DockItem key={k}>
              <AppIcon k={k} />
              <RunDot $on={run} />
              {k === "mail" && <Badge $size>2,640</Badge>}
              {k === "appstore" && <Badge>7</Badge>}
            </DockItem>
          ))}
          <DockSep />
          {dockApps2.map(([k, run]) => (
            <DockItem key={k}>
              <AppIcon k={k} />
              <RunDot $on={run} />
              {k === "discord" && <Badge>•</Badge>}
            </DockItem>
          ))}
          <DockSep />
          <DockItem><QuestionMark>?</QuestionMark></DockItem>
          <DockItem><AppIcon k="txt" /></DockItem>
          {thumbs.map(([kind, top, h, mini, right], i) => (
            <ThumbSlot key={i}>
              <ThumbPage $kind={kind} $top={top} $h={h} />
              {mini && <ThumbMini $right={right}><AppIcon k={mini} size={32} /></ThumbMini>}
              {i === 3 && <ThumbPill $left={64} $w={22}>...</ThumbPill>}
              {i === 5 && <ThumbPill $left={20} $w={62}>-bash...</ThumbPill>}
            </ThumbSlot>
          ))}
          <DockItem><AppIcon k="trash" /></DockItem>
        </Dock>
      </DockZone>
    </Screen>
  );
}
